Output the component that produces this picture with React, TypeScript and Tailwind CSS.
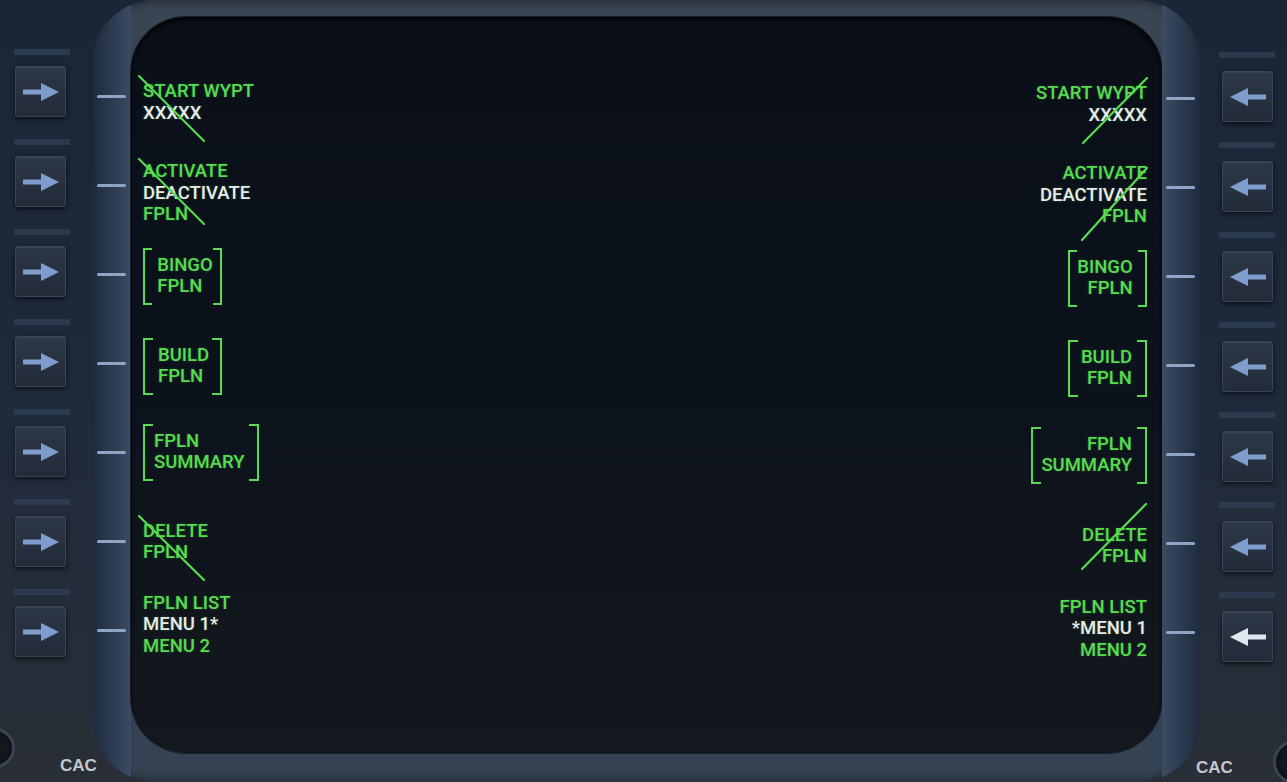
import React from "react";

type Line = { t: string; w?: boolean };
type Cut = [number, number, number, number];
type Block = {
  mt: string;
  lines: Line[];
  cut?: Cut;
  box?: "narrow" | "wide";
};

const GREEN = "#57dc50";

const leftBlocks: Block[] = [
  { mt: "mt-[64px]", lines: [{ t: "START WYPT" }, { t: "XXXXX", w: true }], cut: [-4, -5, 61, 60] },
  { mt: "mt-[37px]", lines: [{ t: "ACTIVATE" }, { t: "DEACTIVATE", w: true }, { t: "FPLN" }], cut: [-4, -2, 61, 63] },
  { mt: "mt-[22px]", lines: [{ t: "BINGO" }, { t: "FPLN" }], box: "narrow" },
  { mt: "mt-[33px]", lines: [{ t: "BUILD" }, { t: "FPLN" }], box: "narrow" },
  { mt: "mt-[29px]", lines: [{ t: "FPLN" }, { t: "SUMMARY" }], box: "wide" },
  { mt: "mt-[40px]", lines: [{ t: "DELETE" }, { t: "FPLN" }], cut: [-4, -5, 61, 59] },
  { mt: "mt-[29px]", lines: [{ t: "FPLN LIST" }, { t: "MENU 1*", w: true }, { t: "MENU 2" }] },
];

const rightBlocks: Block[] = [
  { mt: "mt-[66px]", lines: [{ t: "START WYPT" }, { t: "XXXXX", w: true }], cut: [0, -5, -64, 60] },
  { mt: "mt-[37px]", lines: [{ t: "ACTIVATE" }, { t: "DEACTIVATE", w: true }, { t: "FPLN" }], cut: [0, 5, -65, 77] },
  { mt: "mt-[22px]", lines: [{ t: "BINGO" }, { t: "FPLN" }], box: "narrow" },
  { mt: "mt-[33px]", lines: [{ t: "BUILD" }, { t: "FPLN" }], box: "narrow" },
  { mt: "mt-[30px]", lines: [{ t: "FPLN" }, { t: "SUMMARY" }], box: "wide" },
  { mt: "mt-[41px]", lines: [{ t: "DELETE" }, { t: "FPLN" }], cut: [-1, -21, -65, 44] },
  { mt: "mt-[29px]", lines: [{ t: "FPLN LIST" }, { t: "*MENU 1", w: true }, { t: "MENU 2" }] },
];

function Strike({ cut, right }: { cut: Cut; right?: boolean }) {
  const [x1, y1, x2, y2] = cut;
  const off = right ? 1 : 0;
  return (
    <svg
      width="1"
      height="1"
      className={`absolute top-0 overflow-visible pointer-events-none ${right ? "right-0" : "left-0"}`}
    >
      <line x1={x1 + off} y1={y1} x2={x2 + off} y2={y2} stroke={GREEN} strokeWidth="2.2" strokeLinecap="round" />
    </svg>
  );
}

function Lines({ lines }: { lines: Line[] }) {
  return (
    <>
      {lines.map((l, i) => (
        <div key={i} className={l.w ? "text-[#e9ebea]" : "text-[#57dc50]"}>
          {l.t}
        </div>
      ))}
    </>
  );
}

function Bracket({ side }: { side: "l" | "r" }) {
  return (
    <span
      className={`w-[10px] self-stretch border-y-2 border-[#57dc50] ${side === "l" ? "border-l-2" : "border-r-2"}`}
    />
  );
}

function TextBlock({ b, right }: { b: Block; right?: boolean }) {
  if (b.box) {
    const wide = b.box === "wide";
    return (
      <div className={`${b.mt} flex h-[57px] ${wide ? "w-[116px]" : "w-[79px]"}`}>
        <Bracket side="l" />
        <div
          className={`flex-1 flex flex-col justify-center ${
            right ? `text-right ${wide ? "pr-[5px]" : "pr-[5px]"}` : wide ? "pl-[1px]" : "pl-[5px]"
          }`}
        >
          <Lines lines={b.lines} />
        </div>
        <Bracket side="r" />
      </div>
    );
  }
  return (
    <div className={`${b.mt} relative ${right ? "text-right" : ""}`}>
      <Lines lines={b.lines} />
      {b.cut && <Strike cut={b.cut} right={right} />}
    </div>
  );
}

function Key({ dir, active }: { dir: "l" | "r"; active?: boolean }) {
  return (
    <div className="w-[51px] h-[51px] rounded-[3px] border border-[#384457] bg-linear-to-b from-[#2c3747] to-[#222b38] shadow-[0_2px_5px_rgba(0,0,0,0.65),inset_0_1px_0_rgba(255,255,255,0.06)] flex items-center justify-center">
      <svg width="36" height="18" viewBox="0 0 36 18">
        <path
          d={dir === "r" ? "M0 6.5H18V0L36 9L18 18V11.5H0Z" : "M36 6.5H18V0L0 9L18 18V11.5H36Z"}
          fill={active ? "#e2e7ef" : "#7f9dcc"}
        />
      </svg>
    </div>
  );
}

function KeyColumn({ dir }: { dir: "l" | "r" }) {
  const left = dir === "r";
  return (
    <div className={`flex flex-col ${left ? "pt-[49px]" : "pt-[52px]"}`}>
      {Array.from({ length: 7 }).map((_, i) => (
        <div key={i} className="flex flex-col h-[90px]">
          <div className={`h-[6px] w-[56px] bg-[#2b3a4e] ${left ? "ml-[14px]" : "ml-[19px]"}`} />
          <div className={left ? "mt-[11px] ml-[15px]" : "mt-[13px] ml-[22px]"}>
            <Key dir={dir} active={!left && i === 6} />
          </div>
        </div>
      ))}
    </div>
  );
}

function Ticks({ side }: { side: "l" | "r" }) {
  return (
    <div className={`flex flex-col gap-[86px] ${side === "l" ? "pt-[95px]" : "pt-[97px]"}`}>
      {Array.from({ length: 7 }).map((_, i) => (
        <div key={i} className="ml-[4px] w-[29px] h-[3px] rounded-full bg-[#8ea5c6]" />
      ))}
    </div>
  );
}

export default function App() {
  return (
    <div className="w-[1287px] h-[782px] overflow-hidden flex bg-linear-to-b from-[#1a2535] via-[#1e2a3b] to-[#292e37] font-['Roboto',sans-serif]">
      {/* left keys */}
      <div className="w-[93px] shrink-0 flex flex-col">
        <KeyColumn dir="r" />
        <div className="mt-auto flex items-end pb-[8px]">
          <div className="-ml-[25px] mb-[6px] w-[40px] h-[40px] shrink-0 rounded-full bg-[#15191f] border-[3px] border-[#3a4350] shadow-[inset_0_0_6px_rgba(0,0,0,0.8)]" />
          <span className="ml-[45px] relative z-10 text-[17px] leading-[17px] font-bold text-[#c3c7ce] font-['Liberation_Sans',Arial,sans-serif]">
            CAC
          </span>
        </div>
      </div>

      {/* bezel */}
      <div className="w-[1107px] shrink-0 h-full rounded-[62px] overflow-hidden flex bg-linear-to-b from-[#3a4653] via-[#2c3a4c] to-[#364354] shadow-[inset_0_0_12px_rgba(0,0,0,0.55)]">
        <div className="w-[38px] shrink-0 bg-linear-to-r from-[#1f2b3c] via-[#2c3b50] to-[#3b4b62]">
          <Ticks side="l" />
        </div>

        <div className="w-[1031px] shrink-0 mt-[17px] mb-[29px] rounded-[55px] bg-linear-to-b from-[#0a0f18] via-[#0c121c] to-[#14171d] shadow-[inset_0_3px_4px_rgba(0,0,0,0.8),0_0_0_1px_rgba(20,26,36,0.9)] flex justify-between pl-[12px] pr-[15px] text-[18.5px] leading-[21.5px] font-medium [text-shadow:0_0_3px_rgba(87,220,80,0.25)]">
          <div className="flex flex-col items-start">
            {leftBlocks.map((b, i) => (
              <TextBlock key={i} b={b} />
            ))}
          </div>
          <div className="flex flex-col items-end">
            {rightBlocks.map((b, i) => (
              <TextBlock key={i} b={b} right />
            ))}
          </div>
        </div>

        <div className="w-[38px] shrink-0 bg-linear-to-l from-[#1f2b3c] via-[#2c3b50] to-[#3b4b62]">
          <Ticks side="r" />
        </div>
      </div>

      {/* right keys */}
      <div className="w-[87px] shrink-0 flex flex-col">
        <KeyColumn dir="l" />
        <div className="mt-auto flex items-end pb-[6px]">
          <span className="-ml-[4px] relative z-10 text-[17px] leading-[17px] font-bold text-[#c3c7ce] font-['Liberation_Sans',Arial,sans-serif]">
            CAC
          </span>
          <div className="ml-[40px] -mb-[8px] w-[44px] h-[44px] shrink-0 rounded-full bg-[#15191f] border-[3px] border-[#3a4350] shadow-[inset_0_0_6px_rgba(0,0,0,0.8)]" />
        </div>
      </div>
    </div>
  );
}
